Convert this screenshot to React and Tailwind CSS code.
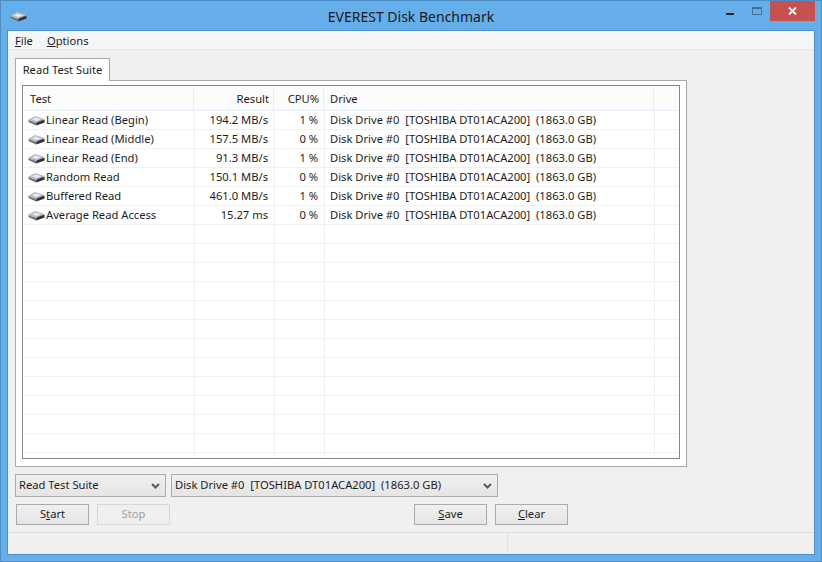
import React from "react";

const tests = [
  ["Linear Read (Begin)", "194.2 MB/s", "1 %"],
  ["Linear Read (Middle)", "157.5 MB/s", "0 %"],
  ["Linear Read (End)", "91.3 MB/s", "1 %"],
  ["Random Read", "150.1 MB/s", "0 %"],
  ["Buffered Read", "461.0 MB/s", "1 %"],
  ["Average Read Access", "15.27 ms", "0 %"],
];
const DRIVE = "Disk Drive #0  [TOSHIBA DT01ACA200]  (1863.0 GB)";

// small grey hard disk used in the title bar and the rows
const DiskIcon = () => (
  <svg width="17" height="11" viewBox="0 0 17 11" className="shrink-0">
    <path d="M0.5 4.5V7L8 10.5L16.5 7.5V4.5Z" fill="#6b6e72" />
    <path d="M0.5 4.5L7 1L16.5 4L8.5 7.5Z" fill="#b9bcc0" />
    <path d="M4 4.5L7.5 2.5L13 4.2L8.5 6Z" fill="#e9eaec" />
    <path d="M8.5 7.8V10.3L16.3 7.4V5Z" fill="#2f3235" />
    <path d="M0.8 5L8.5 8" fill="none" stroke="#f0f0f0" strokeWidth="0.6" />
  </svg>
);

const Chevron = () => (
  <svg width="9" height="6" viewBox="0 0 9 6" className="shrink-0">
    <path d="M1 1L4.5 4.5L8 1" fill="none" stroke="#5a5a5a" strokeWidth="2" />
  </svg>
);

const Combo = ({ className, label }) => (
  <div className={`h-[23px] flex items-center justify-between pl-[3px] pr-[5px] border border-[#acacac] bg-gradient-to-b from-[#f0f0f0] to-[#e5e5e5] whitespace-pre ${className}`}>
    <span>{label}</span>
    <Chevron />
  </div>
);

const Btn = ({ className = "", disabled, children }) => (
  <div className={`w-[73px] h-[21px] flex items-center justify-center border ${disabled ? "border-[#d9d9d9] bg-[#efefef] text-[#a0a0a0]" : "border-[#acacac] bg-gradient-to-b from-[#f0f0f0] to-[#e5e5e5]"} ${className}`}>
    <span>{children}</span>
  </div>
);

const Row = ({ test, result, cpu, drive, className = "h-[19px] border-b" }) => (
  <div className={`flex shrink-0 border-[#f0f0f0] items-center text-[#1c1c1c] ${className}`}>
    <div className="w-[171px] h-full flex items-center gap-[1px] pl-[4px] border-r border-[#f0f0f0] overflow-hidden">
      {test && <DiskIcon />}
      <span>{test}</span>
    </div>
    <div className="w-[80px] h-full flex items-center justify-end pr-[6px] border-r border-[#f0f0f0]">{result}</div>
    <div className="w-[50px] h-full flex items-center justify-end pr-[6px] border-r border-[#f0f0f0]">{cpu}</div>
    <div className="w-[330px] h-full flex items-center pl-[5px] border-r border-[#f0f0f0] whitespace-pre">{drive}</div>
    <div className="flex-1" />
  </div>
);

const App = () => {
  const empty = Array.from({ length: 12 });

  return (
    <div className="w-[822px] h-[562px] flex flex-col bg-[#64aeea] border border-[#4d8cc4] text-[11.2px] text-[#1c1c1c] overflow-hidden" style={{ fontFamily: '"Noto Sans", sans-serif' }}>
      {/* title bar */}
      <div className="h-[29px] shrink-0 grid grid-cols-[1fr_auto_1fr] text-[14px] text-[#1a1a1a]">
        <div className="pl-[9px] pt-[10px]"><DiskIcon /></div>
        <div className="pt-[5px]">EVEREST Disk Benchmark</div>
        <div className="flex justify-end items-start pr-[6px]">
          <div className="w-[26px] h-[20px] flex justify-end pr-[4px] pt-[12px]">
            <div className="w-[8px] h-[2px] bg-[#222222]" />
          </div>
          <div className="w-[32px] h-[20px] flex justify-end pr-[8px] pt-[6px]">
            <div className="w-[10px] h-[8px] border border-t-2 border-[#44709c]" />
          </div>
          <div className="w-[45px] h-[20px] bg-[#c75050] flex items-center justify-center">
            <svg width="9" height="8" viewBox="0 0 9 8"><path d="M1 0.5L8 7.5M8 0.5L1 7.5" stroke="#fff" strokeWidth="1.8" /></svg>
          </div>
        </div>
      </div>

      {/* client area */}
      <div className="mx-[6px] w-[808px] h-[525px] flex flex-col shrink-0 bg-[#f0f0f0] border border-[#4f8fca]">
        <div className="h-[19px] shrink-0 flex items-center gap-[14px] pl-[7px] pt-[3px] bg-[#f5f6f7] border-b border-[#e8e8e8]">
          <span><u>F</u>ile</span>
          <span><u>O</u>ptions</span>
        </div>

        <div className="flex-1 flex flex-col pl-[7px] pt-[8px]">
          <div className="w-[95px] h-[23px] -mb-px relative flex items-center justify-center bg-white border border-b-0 border-[#a9a9a9]">Read Test Suite</div>
          <div className="w-[672px] h-[387px] shrink-0 pt-[4px] px-[6px] pb-[7px] bg-white border border-[#a9a9a9]">
            <div className="h-full flex flex-col px-px border border-[#85858c] overflow-hidden">
              <div className="flex h-[25px] shrink-0 pt-[2px] bg-[#fcfcfd] border-b border-[#e5effa] items-center">
                <div className="w-[170px] h-full flex items-center pl-[6px] border-r border-[#e5effa]">Test</div>
                <div className="w-[80px] h-full flex items-center justify-end pr-[4px] border-r border-[#e5effa]">Result</div>
                <div className="w-[50px] h-full flex items-center justify-end pr-[4px] border-r border-[#e5effa]">CPU%</div>
                <div className="w-[330px] h-full flex items-center pl-[6px] border-r border-[#e5effa]">Drive</div>
              </div>
              {tests.map(([test, result, cpu]) => (
                <Row key={test} test={test} result={result} cpu={cpu} drive={DRIVE} />
              ))}
              {empty.map((_, i) => <Row key={i} />)}
              <Row className="flex-1 min-h-0" />
            </div>
          </div>

          <div className="flex gap-[5px] mt-[7px]">
            <Combo className="w-[151px]" label="Read Test Suite" />
            <Combo className="w-[327px]" label={DRIVE} />
          </div>

          <div className="flex mt-[7px] pl-[1px]">
            <Btn>S<u>t</u>art</Btn>
            <Btn disabled className="ml-[8px]">Stop</Btn>
            <Btn className="ml-[244px]"><u>S</u>ave</Btn>
            <Btn className="ml-[8px]"><u>C</u>lear</Btn>
          </div>
        </div>

        <div className="h-[22px] shrink-0 flex border-t border-[#dfdfdf] pt-[1px]">
          <div className="w-[500px] h-[19px] border-r border-[#dfdfdf]" />
        </div>
      </div>
    </div>
  );
};

export default App;
